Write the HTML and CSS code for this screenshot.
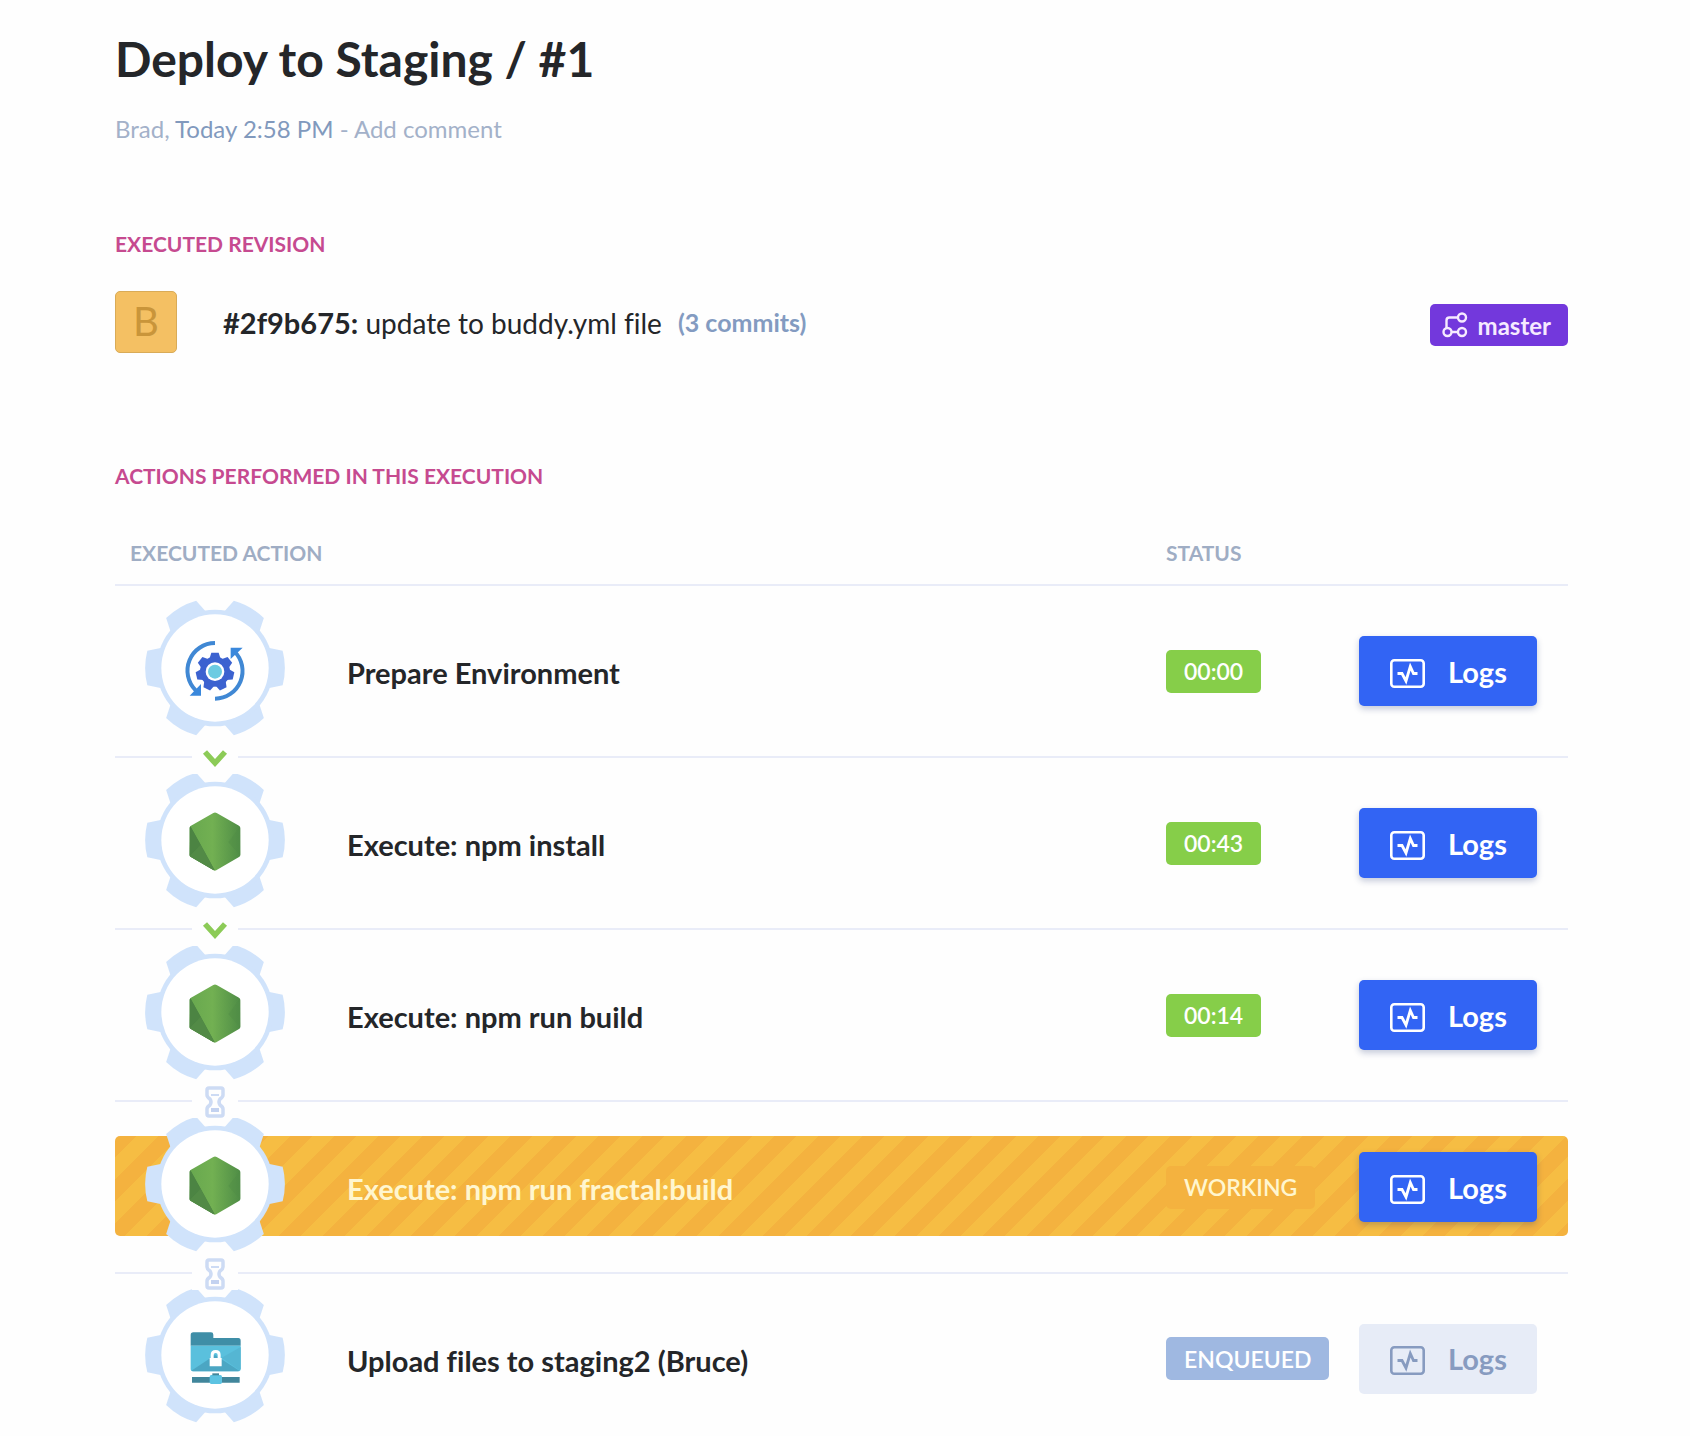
FILE: index.html
```html
<!DOCTYPE html>
<html lang="en">
<head>
<meta charset="utf-8">
<meta name="viewport" content="width=device-width, initial-scale=1">
<title>Deploy to Staging / #1</title>
<link rel="stylesheet" href="styles.css">
</head>
<body>
<svg class="sprite" aria-hidden="true">
  <symbol id="cog" viewBox="-210 -204 420 408">
    <g fill="#d0e3fb">
      <path id="tooth" d="M160-61 203-52A209 209 0 0 1 203 52L160 61z"/>
      <use href="#tooth" transform="rotate(60)"/>
      <use href="#tooth" transform="rotate(120)"/>
      <use href="#tooth" transform="rotate(180)"/>
      <use href="#tooth" transform="rotate(240)"/>
      <use href="#tooth" transform="rotate(300)"/>
      <circle r="175"/>
    </g>
    <circle r="161" fill="#fff"/>
  </symbol>
  <symbol id="prepare" viewBox="-210 -204 420 408">
    <g fill="none" stroke="#4088d4" stroke-width="12">
      <path d="M0-75A83 83 0 0 0-58 67"/>
      <path d="M0 92A83 83 0 0 0 58-50"/>
    </g>
    <path d="M-42 48V83H-76zM47-27V-61H83z" fill="#3a88dc"/>
    <g transform="translate(0 11)" fill="#3c62d0">
      <circle r="45"/>
      <path id="pin" d="M-17-38-11-57H11L17-38z"/>
      <use href="#pin" transform="rotate(51.43)"/>
      <use href="#pin" transform="rotate(102.86)"/>
      <use href="#pin" transform="rotate(154.29)"/>
      <use href="#pin" transform="rotate(205.71)"/>
      <use href="#pin" transform="rotate(257.14)"/>
      <use href="#pin" transform="rotate(308.57)"/>
      <circle r="28" fill="#fff"/>
      <circle r="21" fill="#6ccbe2"/>
    </g>
  </symbol>
  <symbol id="node" viewBox="-210 -204 420 408">
    <linearGradient id="leaf" x1="0" y1="0" x2="1" y2="0">
      <stop offset="0" stop-color="#68a84f"/>
      <stop offset=".45" stop-color="#72b052"/>
      <stop offset="1" stop-color="#4f8d46"/>
    </linearGradient>
    <path d="M-5-81Q0-84 5-81L72-43Q76-41 76-36V45Q76 49 72 51L5 90Q0 93-5 90L-72 51Q-76 49-76 45V-36Q-76-41-72-43z" fill="url(#leaf)"/>
    <path d="M-74-41Q-76-39-76-36V45Q-76 49-72 51L-5 90-1 91-43 14z" fill="#4c8443"/>
    <path d="M-74-41-43 14-76 48z" fill="#4c8443"/>
    <path d="M-43 14-76 48-72 51-5 90-1 91z" fill="#528a46"/>
    <path d="M75-40 40 6Q60 30 76 45z" fill="#4f8b46" opacity=".4"/>
  </symbol>
  <symbol id="upload" viewBox="-210 -204 420 408">
    <path d="M-73-28V-60Q-73-68-65-68H-12Q-5-68-5-61V-51H70Q77-51 77-43V-28z" fill="#3f8ea7"/>
    <path d="M-73-28H77V41Q77 49 69 49H-65Q-73 49-73 41z" fill="#5ac0dd"/>
    <path d="M-71 47 0 0 73 47 69 49H-65z" fill="#4ba6c3"/>
    <path d="M77-24 20 8 73 46Q77 44 77 40z" fill="#55b6d3"/>
    <path d="M-16 34V9H-13V0Q-13-15 2-15T17 0V9H20V34zM-4 9H8V0Q8-6 2-6T-4 0z" fill="#fff"/>
    <path d="M-69 66H74V83H-69z" fill="#41869b"/>
    <rect x="-16" y="60" width="37" height="27" rx="5" fill="#5cc3e2"/>
    <path d="M-8 55H12V61H-8z" fill="#41869b"/>
  </symbol>
  <symbol id="chevron" viewBox="0 0 46 32">
    <path d="M13 10 23 21 33 10" fill="none" stroke="#8ccb57" stroke-width="5.500"/>
  </symbol>
  <symbol id="hourglass" viewBox="0 0 46 32">
    <path d="M17 2H29Q31 2 31 4V9Q31 11 28 13 26 16 28 19 31 21 31 23V28Q31 30 29 30H17Q15 30 15 28V23Q15 21 18 19 20 16 18 13 15 11 15 9V4Q15 2 17 2z" fill="none" stroke="#cddbf4" stroke-width="3.500"/>
    <path d="M19 9H27" stroke="#cddbf4" stroke-width="2"/>
    <path d="M19 22H27V26H19z" fill="#c3d2f0"/>
  </symbol>
  <symbol id="logs" viewBox="0 0 35 29">
    <rect x="1.3" y="1.3" width="32.4" height="26.4" rx="3" fill="none" stroke="currentColor" stroke-width="2.6"/>
    <path d="M7.500 14.500H12L16 22 20.300 7.500 23.500 14.500H27.500" fill="none" stroke="currentColor" stroke-width="2.800"/>
  </symbol>
</svg>

<main class="page">
  <header>
    <h1 class="title">Deploy to Staging / #1</h1>
    <p class="meta"><a href="#brad">Brad</a>, <time class="meta-time">Today 2:58 PM</time> - <a href="#comment">Add comment</a></p>
  </header>

  <section>
    <h2 class="section-title">Executed revision</h2>
    <div class="revision">
      <span class="avatar">B</span>
      <p class="message"><strong class="hash">#2f9b675:</strong> update to buddy.yml file</p>
      <a class="commits" href="#commits">(3 commits)</a>
      <a class="branch" href="#master">
        <svg class="branch-icon" viewBox="0 0 26 26" aria-hidden="true"><g fill="none" stroke="currentColor" stroke-width="2.400"><circle cx="20" cy="5.500" r="4"/><circle cx="5.500" cy="20" r="4"/><circle cx="20" cy="20" r="4"/><path d="M16 5.500H7.500Q4.500 5.500 4.500 8.500V16M9.500 20H16"/></g></svg>
        master
      </a>
    </div>
  </section>

  <section>
    <h2 class="section-title section-title-actions">Actions performed in this execution</h2>
    <table class="actions">
      <colgroup>
        <col class="col-icon">
        <col>
        <col class="col-status">
        <col class="col-logs">
      </colgroup>
      <thead>
        <tr><th class="head-action" colspan="2">Executed action</th><th>Status</th><th></th></tr>
      </thead>
      <tbody>
        <tr>
          <td><svg class="gear" aria-hidden="true"><use href="#cog"/><use href="#prepare"/></svg><svg class="link" aria-hidden="true"><use href="#chevron"/></svg></td>
          <td class="name">Prepare Environment</td>
          <td class="cell-status"><span class="badge badge-done">00:00</span></td>
          <td><button class="button" type="button"><svg class="button-icon" aria-hidden="true"><use href="#logs"/></svg>Logs</button></td>
        </tr>
        <tr>
          <td><svg class="gear" aria-hidden="true"><use href="#cog"/><use href="#node"/></svg><svg class="link" aria-hidden="true"><use href="#chevron"/></svg></td>
          <td class="name">Execute: npm install</td>
          <td class="cell-status"><span class="badge badge-done">00:43</span></td>
          <td><button class="button" type="button"><svg class="button-icon" aria-hidden="true"><use href="#logs"/></svg>Logs</button></td>
        </tr>
        <tr>
          <td><svg class="gear" aria-hidden="true"><use href="#cog"/><use href="#node"/></svg><svg class="link" aria-hidden="true"><use href="#hourglass"/></svg></td>
          <td class="name">Execute: npm run build</td>
          <td class="cell-status"><span class="badge badge-done">00:14</span></td>
          <td><button class="button" type="button"><svg class="button-icon" aria-hidden="true"><use href="#logs"/></svg>Logs</button></td>
        </tr>
        <tr class="working">
          <td class="working-cell"><svg class="gear" aria-hidden="true"><use href="#cog"/><use href="#node"/></svg><svg class="link" aria-hidden="true"><use href="#hourglass"/></svg></td>
          <td class="name">Execute: npm run fractal:build</td>
          <td class="cell-status"><span class="badge badge-working">WORKING</span></td>
          <td><button class="button" type="button"><svg class="button-icon" aria-hidden="true"><use href="#logs"/></svg>Logs</button></td>
        </tr>
        <tr>
          <td><svg class="gear" aria-hidden="true"><use href="#cog"/><use href="#upload"/></svg></td>
          <td class="name">Upload files to staging2 (Bruce)</td>
          <td class="cell-status"><span class="badge badge-enqueued">ENQUEUED</span></td>
          <td><button class="button" type="button" disabled><svg class="button-icon" aria-hidden="true"><use href="#logs"/></svg>Logs</button></td>
        </tr>
      </tbody>
    </table>
  </section>
</main>
</body>
</html>
```
FILE: styles.css
```css
* {
  box-sizing: border-box;
}

body {
  margin: 0;
  background: #fefefe;
  color: #242629;
  font-family: Lato, "Liberation Sans", sans-serif;
  font-size: 29px;
  font-variant-ligatures: none;
}

h1,
h2,
p {
  margin: 0;
}

a {
  color: inherit;
  text-decoration: none;
}

.sprite {
  position: absolute;
  width: 0;
  height: 0;
}

.page {
  padding: 29px 122px 0 115px;
}

.title {
  font-size: 48px;
  font-weight: 700;
  line-height: 60px;
}

.meta {
  margin-top: 24px;
  color: #a3b1c9;
  font-size: 24px;
  line-height: 32px;
}

.meta-time {
  color: #8199bd;
}

.section-title {
  margin-top: 87px;
  color: #c64a90;
  font-size: 21px;
  font-weight: 700;
  line-height: 24px;
  text-transform: uppercase;
}

.section-title-actions {
  margin-top: 111px;
}

.revision {
  display: flex;
  align-items: center;
  margin-top: 35px;
}

.avatar {
  display: grid;
  place-items: center;
  width: 62px;
  height: 62px;
  margin-right: 46px;
  padding-bottom: 2px;
  border: 1px solid #d9ab57;
  border-radius: 5px;
  background: #f4c063;
  color: #c9953a;
  font-size: 40px;
}

.message {
  font-size: 28px;
}

.hash {
  font-size: 29px;
}

.commits {
  margin-left: 16px;
  color: #839bc1;
  font-size: 25px;
  font-weight: 700;
}

.branch {
  display: flex;
  align-items: center;
  gap: 10px;
  height: 42px;
  margin: 6px 0 0 auto;
  padding: 0 17px 0 12px;
  border-radius: 5px;
  background: #7338dc;
  color: #f6eaff;
  font-size: 24px;
  font-weight: 700;
}

.branch-icon {
  width: 26px;
  height: 26px;
}

.actions {
  width: 100%;
  margin-top: 53px;
  border-spacing: 0;
  table-layout: fixed;
}

.actions th {
  padding: 0 0 19px;
  border-bottom: 2px solid #e9ecf8;
  color: #9fadc4;
  font-size: 21px;
  font-weight: 700;
  line-height: 24px;
  text-align: left;
  text-transform: uppercase;
}

.actions .head-action {
  padding-left: 15px;
}

.col-icon {
  width: 232px;
}

.col-status {
  width: 193px;
}

.col-logs {
  width: 209px;
}

.actions tbody tr {
  position: relative;
}

.actions td {
  height: 172px;
  padding: 0;
  border-bottom: 2px solid #e9ecf8;
  vertical-align: middle;
}

.actions tbody tr:last-child td {
  height: 162px;
  padding-top: 7px;
  border-bottom: 0;
}

.gear {
  position: relative;
  display: block;
  width: 140px;
  height: 136px;
  margin: 0 0 7px 30px;
}

.link {
  position: absolute;
  bottom: -16px;
  left: 77px;
  z-index: 1;
  width: 46px;
  height: 32px;
  background: #fefefe;
}

.actions .name {
  position: relative;
  padding-top: 3px;
  font-weight: 700;
}

.actions tbody tr:last-child .name {
  padding-top: 10px;
}

.working .name {
  color: #fff6cf;
}

.working-cell::before {
  position: absolute;
  inset: 34px 0 38px;
  border-radius: 5px;
  background: linear-gradient(135deg, #f4b23f 25%, #f6bd43 25% 50%, #f4b23f 50% 75%, #f6bd43 75%) 0 0 / 44px 44px;
  content: "";
}

.cell-status {
  position: relative;
}

.badge {
  display: inline-flex;
  align-items: center;
  height: 43px;
  padding: 0 18px;
  border-radius: 5px;
  color: #fff;
  font-size: 23px;
  font-weight: 600;
}

.badge-done {
  background: #86ce49;
}

.badge-working {
  background: #f4b23f;
  color: #fff6cf;
}

.badge-enqueued {
  background: #9fb8e1;
}

.button {
  position: relative;
  display: flex;
  align-items: center;
  gap: 23px;
  height: 70px;
  padding: 0 30px 0 31px;
  border: 0;
  border-radius: 5px;
  background: #3264f4;
  box-shadow: 0 3px 6px #1c2f7040;
  color: #fff;
  font: inherit;
  font-weight: 700;
}

.button:disabled {
  background: #e7ecf7;
  box-shadow: none;
  color: #879bc0;
}

.button-icon {
  width: 35px;
  height: 29px;
  margin-top: 4px;
}
```
